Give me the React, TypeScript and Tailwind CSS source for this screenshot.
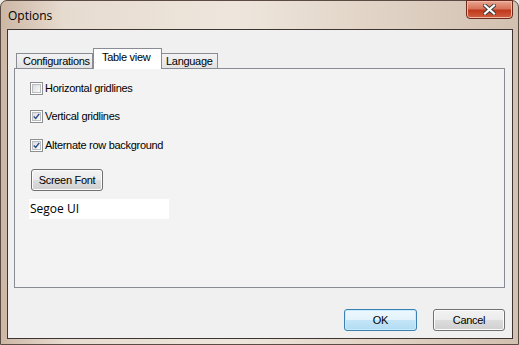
import type { ReactNode } from 'react';

const FONT = { fontFamily: '"Liberation Sans", Arial, sans-serif' };
const SEGOE = { fontFamily: '"Open Sans", "Liberation Sans", sans-serif' };

function CheckBox({ checked, label }: { checked: boolean; label: string }) {
  return (
    <div className="flex items-center gap-[2px] h-[13px]">
      <div className="w-[13px] h-[13px] border border-[#8e8f8f] bg-white p-[1px]">
        <div className="w-full h-full border border-[#b9bcc0] bg-gradient-to-br from-[#dcdcdc] to-[#fbfbfb] flex items-center justify-center">
          {checked && (
            <svg width="9" height="9" viewBox="0 0 9 9">
              <path d="M1 4.5 L3.5 7 L8 1.2" stroke="#2c4a8a" strokeWidth="1.8" fill="none" />
            </svg>
          )}
        </div>
      </div>
      <span className="text-[11px] leading-none text-black tracking-[-0.3px]">{label}</span>
    </div>
  );
}

function Button({ children, primary }: { children: ReactNode; primary?: boolean }) {
  return (
    <div
      className={
        primary
          ? 'w-[73px] h-[22px] rounded-[3px] border border-[#3c7fb1] shadow-[inset_0_0_0_1px_#c7ecfd] bg-[linear-gradient(#edf7fd_0%,#e2f3fc_50%,#c4e5f8_51%,#b2dcf3_100%)] flex items-center justify-center text-[11px] text-black tracking-[-0.3px]'
          : 'w-[72px] h-[22px] rounded-[3px] border border-[#707070] shadow-[inset_0_0_0_1px_#fcfcfc] bg-[linear-gradient(#f2f2f2_0%,#ebebeb_50%,#dddddd_51%,#cfcfcf_100%)] flex items-center justify-center text-[11px] text-black tracking-[-0.3px]'
      }
    >
      {children}
    </div>
  );
}

function Tab({ label, active, className }: { label: string; active?: boolean; className: string }) {
  if (active) {
    return (
      <div
        className={`h-[21px] -mb-[1px] pt-[3px] border border-b-0 border-[#898c95] bg-white text-[11px] text-black leading-none tracking-[-0.3px] relative z-10 ${className}`}
      >
        {label}
      </div>
    );
  }
  return (
    <div
      className={`h-[15px] pt-[2px] border border-b-0 border-[#898c95] bg-[linear-gradient(#f3f3f3,#e3e3e3)] text-[11px] text-black leading-none tracking-[-0.3px] ${className}`}
    >
      {label}
    </div>
  );
}

export default function App() {
  return (
    <div className="w-[519px] h-[345px] overflow-hidden bg-[#ece8e4]" style={FONT}>
      <div className="w-[519px] h-[345px] flex flex-col rounded-t-[7px] border border-[#5a4c42] bg-[linear-gradient(90deg,#cdb7a5_0%,#e6dbcf_12%,#eee6dd_45%,#e2d5c8_70%,#d2c0b0_100%)]">
        <div className="h-[28px] flex items-start justify-between pl-[7px] pr-[5px]">
          <span className="mt-[6px] text-[12px] text-black" style={SEGOE}>
            Options
          </span>
          <div className="w-[47px] h-[19px] -mt-[1px] rounded-b-[4px] border border-[#6b2a1c] bg-[linear-gradient(#e8a690_0%,#d8735a_45%,#c0391c_55%,#d0603f_100%)] flex items-center justify-center shadow-[inset_0_0_0_1px_#f0b8a8]">
            <svg width="13" height="11" viewBox="0 0 13 11">
              <path d="M2 1.5 L11 9.5 M11 1.5 L2 9.5" stroke="#3a3a3a" strokeWidth="4" strokeLinecap="square" />
              <path d="M2 1.5 L11 9.5 M11 1.5 L2 9.5" stroke="#ffffff" strokeWidth="2.2" strokeLinecap="square" />
            </svg>
          </div>
        </div>
        <div className="flex-1 ml-[6px] mr-[5px] mb-[5px] border border-[#3e3532] bg-[#f0f0f0] flex flex-col pt-[18px] pl-[6px] pr-[7px]">
          <div className="flex items-end pl-[2px] h-[20px]">
            <Tab label="Configurations" className="w-[77px] pl-[6px]" />
            <Tab label="Table view" active className="w-[69px] pl-[8px]" />
            <Tab label="Language" className="-ml-[1px] w-[57px] pl-[4px]" />
          </div>
          <div className="h-[220px] border border-[#898c95] bg-[#f3f3f3] pl-[15px] pt-[13px] flex flex-col">
            <CheckBox checked={false} label="Horizontal gridlines" />
            <div className="mt-[15px]">
              <CheckBox checked label="Vertical gridlines" />
            </div>
            <div className="mt-[16px]">
              <CheckBox checked label="Alternate row background" />
            </div>
            <div className="mt-[17px] ml-[1px]">
              <Button>Screen Font</Button>
            </div>
            <div
              className="mt-[8px] -ml-[1px] w-[140px] h-[20px] bg-white flex items-center pl-[1px] text-[12px] text-black"
              style={SEGOE}
            >
              Segoe UI
            </div>
          </div>
          <div className="flex justify-end gap-[16px] mt-[21px]">
            <Button primary>OK</Button>
            <Button>Cancel</Button>
          </div>
        </div>
      </div>
    </div>
  );
}
